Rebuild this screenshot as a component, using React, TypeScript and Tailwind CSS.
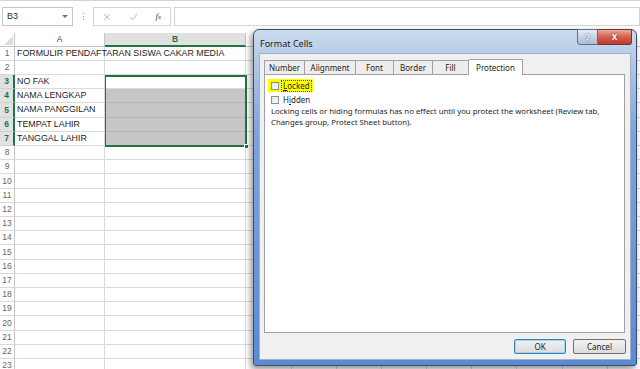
import React from "react";

const colWidths = ["w-[46px]", "w-[45px]", "w-[45px]", "w-[45px]", "w-[45px]", "w-[45px]", "w-[46px]", "w-[45px]", "w-[45px]", "w-[40px]"];

const cellA: Record<number, string> = {
  1: "FORMULIR PENDAFTARAN SISWA CAKAR MEDIA",
  3: "NO FAK",
  4: "NAMA LENGKAP",
  5: "NAMA PANGGILAN",
  6: "TEMPAT LAHIR",
  7: "TANGGAL LAHIR",
};

function Row({ n }: { n: number }) {
  const sel = n >= 3 && n <= 7;
  const tall = n % 5 === 0;
  return (
    <div className={`flex ${tall ? "h-[15px]" : "h-[14px]"}`}>
      <div
        className={`w-[15px] shrink-0 flex items-center justify-center border-b text-[8.5px] ${
          sel
            ? "bg-[#e1e1e1] text-[#217346] font-bold border-r-2 border-r-[#217346] border-b-[#d0d0d0]"
            : "bg-white text-[#666] border-r border-r-[#c6c6c6] border-b-[#dadada]"
        }`}
      >
        {n}
      </div>
      <div className="w-[90px] shrink-0 border-r border-b border-[#dadada] pl-[2px] flex items-center text-[8.85px] text-[#222] whitespace-nowrap overflow-visible relative z-[1]">
        {cellA[n] ?? ""}
      </div>
      <div
        className={`w-[141px] shrink-0 border-r border-b ${
          n >= 4 && n <= 7 ? "bg-[#c6c6c6] border-[#b5b5b5]" : "border-[#dadada]"
        }`}
      />
      {colWidths.map((w, i) => (
        <div key={i} className={`${w} shrink-0 border-r border-b border-[#dadada]`} />
      ))}
    </div>
  );
}

export default function App() {
  const rows = Array.from({ length: 23 }, (_, i) => i + 1);
  return (
    <div className="relative w-[640px] h-[369px] overflow-hidden bg-white font-['Liberation_Sans',sans-serif]">
      {/* top rule */}
      <div className="h-px bg-[#d4d4d4]" />
      {/* formula bar */}
      <div className="h-[32px] flex items-start pt-[6px]">
        <div className="ml-[2px] w-[71px] h-[19px] border border-[#c6c6c6] flex items-center justify-between pl-[4px] pr-[4px]">
          <span className="text-[9px] text-[#333]">B3</span>
          <svg width="6" height="4" viewBox="0 0 6 4">
            <path d="M0 0 L6 0 L3 3 Z" fill="#6f6f6f" />
          </svg>
        </div>
        <div className="ml-[8px] w-[4px] h-[19px] flex flex-col items-center justify-center gap-[2px]">
          <div className="w-px h-px bg-[#9a9a9a]" />
          <div className="w-px h-px bg-[#9a9a9a]" />
          <div className="w-px h-px bg-[#9a9a9a]" />
        </div>
        <div className="ml-[8px] w-[78px] h-[19px] border border-[#d4d4d4] flex items-center justify-between px-[9px]">
          <svg width="8" height="8" viewBox="0 0 8 8">
            <path d="M1 1 L7 7 M7 1 L1 7" stroke="#bdbdbd" strokeWidth="1" />
          </svg>
          <svg width="9" height="8" viewBox="0 0 9 8">
            <path d="M1 4 L3.5 7 L8 1" stroke="#bdbdbd" strokeWidth="1" fill="none" />
          </svg>
          <span className="text-[9px] italic text-[#444] font-['Liberation_Serif',serif]">
            f<span className="text-[7px]">x</span>
          </span>
        </div>
        <div className="ml-[3px] flex-1 h-[19px] border border-[#d4d4d4] bg-white" />
      </div>

      {/* column headers */}
      <div className="flex h-[14px]">
        <div className="w-[15px] shrink-0 border-r border-b border-[#c6c6c6] relative">
          <svg className="absolute right-[1px] bottom-[1px]" width="9" height="9" viewBox="0 0 9 9">
            <path d="M9 0 L9 9 L0 9 Z" fill="#dcdcdc" />
          </svg>
        </div>
        <div className="w-[90px] shrink-0 border-r border-b border-[#c6c6c6] flex items-center justify-center text-[8.5px] text-[#444]">
          A
        </div>
        <div className="w-[141px] shrink-0 border-r border-r-[#c6c6c6] border-b-2 border-b-[#217346] bg-[#e1e1e1] flex items-center justify-center text-[8.5px] font-bold text-[#217346]">
          B
        </div>
        {colWidths.map((w, i) => (
          <div key={i} className={`${w} shrink-0 border-r border-b border-[#c6c6c6]`} />
        ))}
      </div>

      {/* rows */}
      <div className="relative">
        {rows.map((n) => (
          <Row key={n} n={n} />
        ))}
        {/* selection outline B3:B7 */}
        <div className="absolute left-[104px] top-[28px] w-[143px] h-[72px] border-2 border-[#217346] pointer-events-none" />
        <div className="absolute left-[244px] top-[97px] w-[5px] h-[5px] bg-[#217346] border border-white" />
      </div>

      {/* dialog */}
      <div className="absolute left-[253px] top-[29px] w-[384px] h-[337px] rounded-t-[6px] rounded-b-[3px] border border-[#3a4d6c] bg-gradient-to-b from-[#cbdaed] via-[#7fa4db] via-30% to-[#5b8ad3] shadow-[-2px_3px_6px_rgba(0,0,0,0.45)] flex flex-col">
        {/* title bar */}
        <div className="h-[23px] shrink-0 flex items-start justify-between relative">
          <span className="ml-[6px] mt-[9px] text-[9px] text-[#1b1b1b] font-['Noto_Sans',sans-serif] leading-none">
            Format Cells
          </span>
          <div className="flex mr-[4px] -mt-px">
            <div className="w-[21px] h-[16px] rounded-bl-[3px] border border-[#5f6f88] bg-gradient-to-b from-[#e4ecf6] to-[#a9bcd6] flex items-center justify-center">
              <span className="text-[9px] font-bold text-[#f4f7fb] [text-shadow:0_0_2px_#34465f] leading-none">?</span>
            </div>
            <div className="w-[34px] h-[16px] rounded-br-[3px] border border-l-0 border-[#6a3a36] bg-gradient-to-b from-[#e9a99b] via-[#d4604c] to-[#c0392b] flex items-center justify-center">
              <span className="text-[10px] font-bold text-white [text-shadow:0_0_2px_#4a1a14] leading-none">x</span>
            </div>
          </div>
        </div>
        {/* client area */}
        <div className="mx-[5px] mb-[5px] flex-1 bg-[#f0f0f0] border border-[#9fb1cb] flex flex-col font-['Noto_Sans',sans-serif] text-[8px] text-[#1e1e1e]">
          {/* tabs */}
          <div className="mt-[4px] ml-[4px] flex items-end h-[16px]">
            <div className="w-[41px] h-[14px] border border-b-0 border-[#a0a0a0] bg-[#ededed] flex items-center justify-center">Number</div>
            <div className="w-[51px] h-[14px] border border-b-0 border-l-0 border-[#a0a0a0] bg-[#ededed] flex items-center justify-center">Alignment</div>
            <div className="w-[38px] h-[14px] border border-b-0 border-l-0 border-[#a0a0a0] bg-[#ededed] flex items-center justify-center">Font</div>
            <div className="w-[39px] h-[14px] border border-b-0 border-l-0 border-[#a0a0a0] bg-[#ededed] flex items-center justify-center">Border</div>
            <div className="w-[36px] h-[14px] border border-b-0 border-l-0 border-[#a0a0a0] bg-[#ededed] flex items-center justify-center">Fill</div>
            <div className="w-[54px] h-[16px] border border-b-0 border-l-0 border-[#a0a0a0] bg-white flex items-center justify-center -mb-px relative z-[1]">Protection</div>
          </div>
          {/* panel */}
          <div className="ml-[4px] mr-[5px] h-[259px] bg-white border border-[#a0a0a0] px-[6px] pt-[4px]">
            <div className="flex items-center h-[13px]">
              <div className="flex items-center bg-[#ffff00] -ml-[3px] pl-[3px] pr-[2px] h-[13px]">
                <div className="w-[8px] h-[8px] border border-[#8e8f8f] bg-gradient-to-br from-[#e6e6e6] to-[#f8f8f8]" />
                <span className="ml-[3px] outline-1 outline-dotted outline-[#444] px-px leading-[10px]">
                  <span className="underline">L</span>ocked
                </span>
              </div>
            </div>
            <div className="flex items-center h-[13px] mt-px">
              <div className="w-[8px] h-[8px] border border-[#8e8f8f] bg-gradient-to-br from-[#e6e6e6] to-[#f8f8f8]" />
              <span className="ml-[4px]">
                H<span className="underline">i</span>dden
              </span>
            </div>
            <div className="mt-0 leading-[11px] text-[7.8px] w-[340px]">
              Locking cells or hiding formulas has no effect until you protect the worksheet (Review tab, Changes group, Protect Sheet button).
            </div>
          </div>
          {/* buttons */}
          <div className="flex justify-end gap-[7px] mt-[6px] mr-[4px]">
            <div className="w-[52px] h-[15px] rounded-[2px] border border-[#3c7fb1] bg-gradient-to-b from-[#f2f2f2] to-[#dcdcdc] shadow-[inset_0_0_0_1px_#9fd4f5] flex items-center justify-center">OK</div>
            <div className="w-[53px] h-[15px] rounded-[2px] border border-[#707070] bg-gradient-to-b from-[#f2f2f2] to-[#dcdcdc] flex items-center justify-center">Cancel</div>
          </div>
        </div>
      </div>
    </div>
  );
}
